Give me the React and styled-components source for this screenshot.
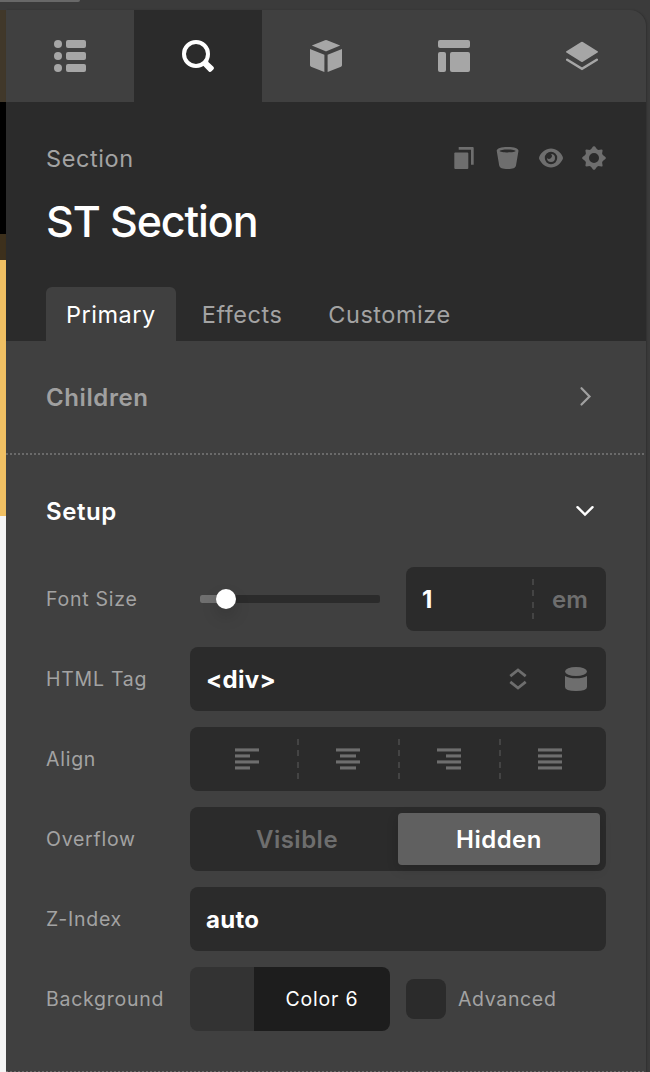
import React, { useState } from "react";
import styled, { createGlobalStyle } from "styled-components";

const GlobalStyle = createGlobalStyle`
  * {
    box-sizing: border-box;
  }

  body {
    margin: 0;
    background: #3b3b3b;
    font-family: Inter, "Liberation Sans", sans-serif;
    overflow: hidden;
  }

  button {
    font: inherit;
    letter-spacing: inherit;
    border: 0;
    padding: 0;
    background: none;
  }
`;

const mainTabs = [
  {
    id: "outline",
    icon: (
      <svg width="32" height="32" fill="currentColor">
        <circle cx="4" cy="4" r="4" />
        <circle cx="4" cy="16" r="4" />
        <circle cx="4" cy="28" r="4" />
        <rect x="12" width="20" height="8" rx="2" />
        <rect x="12" y="12" width="20" height="8" rx="2" />
        <rect x="12" y="24" width="20" height="8" rx="2" />
      </svg>
    ),
  },
  {
    id: "inspector",
    icon: (
      <svg width="32" height="32" fill="currentColor">
        <circle cx="14" cy="14" r="12" fill="none" stroke="currentColor" strokeWidth="4" />
        <path d="M21 25.5L26.8 31.4Q28.2 32.6 29.5 31.3L31.3 29.5Q32.6 28.2 31.4 26.8L26.3 22V19L20 23Z" />
      </svg>
    ),
  },
  {
    id: "elements",
    icon: (
      <svg width="32" height="32" fill="currentColor">
        <path d="M15 .3Q16 -.1 17 .3L30.2 5.6L17 11Q16 11.4 15 11L1.8 5.6Z" />
        <path d="M0 9L14.4 14.8V32L1 26.7Q0 26.3 0 25.3Z" />
        <path d="M32 9L17.6 14.8V32L31 26.7Q32 26.3 32 25.3Z" />
      </svg>
    ),
  },
  {
    id: "layout",
    icon: (
      <svg width="32" height="32" fill="currentColor">
        <rect width="32" height="8" rx="2" />
        <rect y="12" width="8" height="20" rx="2" />
        <rect x="12" y="12" width="20" height="20" rx="2" />
      </svg>
    ),
  },
  {
    id: "layers",
    icon: (
      <svg width="32" height="32" fill="currentColor">
        <path d="M15.2 2.1Q16 1.6 16.8 2.1L31.6 11.3Q32.4 12 31.6 12.6L16.8 21.8Q16 22.3 15.2 21.8L.4 12.6Q-.4 12 .4 11.3Z" />
        <path
          d="M1.2 19.7L16 28.7L30.8 19.7"
          fill="none"
          stroke="currentColor"
          strokeWidth="2.5"
          strokeLinecap="round"
        />
      </svg>
    ),
  },
];

const headerActions = [
  {
    id: "duplicate",
    icon: (
      <svg width="24" height="24" fill="currentColor">
        <rect x="2.3" y="6.5" width="14" height="16.5" rx="1" />
        <path d="M6.7 1H20.7Q21.7 1 21.7 2V18.8H19V3.7H6.7Z" />
      </svg>
    ),
  },
  {
    id: "delete",
    icon: (
      <svg width="24" height="24" viewBox="-0.6 0 24 24" fill="currentColor">
        <path
          fillRule="evenodd"
          d="M1.1 4.7C1.1 2.4 5.6 1 12 1S22.9 2.4 22.9 4.7L20.4 19.5C20 22 17 23 12 23S4 22 3.6 19.5ZM12 3.4C8 3.4 4 4.1 4 5S8 6.4 12 6.4S20 5.9 20 5S16 3.4 12 3.4Z"
        />
      </svg>
    ),
  },
  {
    id: "preview",
    icon: (
      <svg width="24" height="24" fill="currentColor">
        <path
          fillRule="evenodd"
          d="M12 2.6C6.5 2.6 2.3 6.5 .3 10.7Q-.2 12 .3 13.3C2.3 17.5 6.5 21.4 12 21.4S21.7 17.5 23.7 13.3Q24.2 12 23.7 10.7C21.7 6.5 17.5 2.6 12 2.6ZM12 5.8A6.2 6.2 0 1 1 12 18.2A6.2 6.2 0 1 1 12 5.8Z"
        />
        <path d="M12 8A4 4 0 1 1 8 12A2.4 2.4 0 0 0 12 8Z" />
      </svg>
    ),
  },
  {
    id: "settings",
    icon: (
      <svg width="24" height="24" fill="currentColor">
        <path
          fillRule="evenodd"
          d="M11 .6Q12 -.3 13 .6L15 3.2L16.5 3.9L19.4 3.4Q20.6 3.5 20.6 4.6L20.1 7.5L20.8 9L23.4 11Q24.3 12 23.4 13L20.8 15L20.1 16.5L20.6 19.4Q20.5 20.6 19.4 20.6L16.5 20.1L15 20.8L13 23.4Q12 24.3 11 23.4L9 20.8L7.5 20.1L4.6 20.6Q3.4 20.5 3.4 19.4L3.9 16.5L3.2 15L.6 13Q-.3 12 .6 11L3.2 9L3.9 7.5L3.4 4.6Q3.5 3.4 4.6 3.4L7.5 3.9L9 3.2ZM12 7A5 5 0 1 0 12 17A5 5 0 1 0 12 7Z"
        />
      </svg>
    ),
  },
];

// [x, width] of the four lines in each icon
const alignOptions = {
  left: [[0, 24], [0, 15], [0, 24], [0, 15]],
  center: [[0, 24], [4, 16], [0, 24], [4, 16]],
  right: [[0, 24], [9, 15], [0, 24], [9, 15]],
  justify: [[0, 24], [0, 24], [0, 24], [0, 24]],
};

function App() {
  const [mainTab, setMainTab] = useState("inspector");
  const [subTab, setSubTab] = useState("Primary");
  const [overflow, setOverflow] = useState("Hidden");
  const [fontSize] = useState(1);

  return (
    <>
      <GlobalStyle />
      <StTopStrip>
        <StTopCorner />
      </StTopStrip>
      <StLayout>
        <StCanvas>
          <StBand $height={92} $color="#41382a" />
          <StBand $height={132} $color="#000" />
          <StBand $height={26} $color="#3d301c" />
          <StBand $height={256} $color="#f0c063" />
          <StBand $height={556} $color="#f5f5f5" />
        </StCanvas>
        <StPanel>
          <StMainTabs>
            {mainTabs.map((tab) => (
              <StMainTab
                key={tab.id}
                $active={tab.id === mainTab}
                onClick={() => setMainTab(tab.id)}
              >
                {tab.icon}
              </StMainTab>
            ))}
          </StMainTabs>

          <StHeader>
            <StHeaderTop>
              <StType>Section</StType>
              <StActions>
                {headerActions.map((action) => (
                  <StAction key={action.id}>{action.icon}</StAction>
                ))}
              </StActions>
            </StHeaderTop>
            <StTitle>ST Section</StTitle>
            <StSubTabs>
              {["Primary", "Effects", "Customize"].map((name) => (
                <StSubTab key={name} $active={name === subTab} onClick={() => setSubTab(name)}>
                  {name}
                </StSubTab>
              ))}
            </StSubTabs>
          </StHeader>

          <StGroup>
            <StGroupHeader>
              Children
              <svg width="42" height="24" fill="none" stroke="currentColor" strokeWidth="2.2">
                <path d="M17.5 3.2L25.5 11.4L17.5 19.5" strokeLinecap="round" />
              </svg>
            </StGroupHeader>
          </StGroup>

          <StGroup>
            <StGroupHeader $open>
              Setup
              <svg width="42" height="24" fill="none" stroke="currentColor" strokeWidth="2.4">
                <path d="M13.5 8.2L21 15.6L28.5 8.2" strokeLinecap="round" />
              </svg>
            </StGroupHeader>
            <StControls>
              <StRow>
                <StLabel>Font Size</StLabel>
                <StSplit>
                  <StSlider>
                    <StTrack>
                      <StFill style={{ width: `${fontSize * 14.5}%` }} />
                      <StThumb />
                    </StTrack>
                  </StSlider>
                  <StField>
                    <StValue>{fontSize}</StValue>
                    <StDivider />
                    <StUnit>em</StUnit>
                  </StField>
                </StSplit>
              </StRow>

              <StRow>
                <StLabel>HTML Tag</StLabel>
                <StField>
                  <StValue>&lt;div&gt;</StValue>
                  <StFieldIcons>
                    <svg width="18" height="24" fill="none" stroke="currentColor" strokeWidth="2.8">
                      <path d="M1.3 9.2L9 3L16.7 9.2M1.3 14.8L9 21L16.7 14.8" />
                    </svg>
                    <svg width="22" height="24" fill="currentColor">
                      <ellipse cx="11" cy="4.5" rx="11" ry="4.5" />
                      <path d="M0 8.9Q4 11.2 11 11.2T22 8.9V20Q22 24 11 24T0 20Z" />
                    </svg>
                  </StFieldIcons>
                </StField>
              </StRow>

              <StRow>
                <StLabel>Align</StLabel>
                <StSegments>
                  {Object.entries(alignOptions).map(([name, lines], i) => (
                    <React.Fragment key={name}>
                      {i > 0 && <StDivider $inline />}
                      <StSegment>
                        <svg width="24" height="22" fill="currentColor">
                          {lines.map(([x, width], n) => (
                            <rect key={n} x={x} y={n * 6 + 0.4} width={width} height="3.1" />
                          ))}
                        </svg>
                      </StSegment>
                    </React.Fragment>
                  ))}
                </StSegments>
              </StRow>

              <StRow>
                <StLabel>Overflow</StLabel>
                <StSegments>
                  {["Visible", "Hidden"].map((name) => (
                    <StSegment
                      key={name}
                      $active={name === overflow}
                      onClick={() => setOverflow(name)}
                    >
                      {name}
                    </StSegment>
                  ))}
                </StSegments>
              </StRow>

              <StRow>
                <StLabel>Z-Index</StLabel>
                <StField>
                  <StValue>auto</StValue>
                </StField>
              </StRow>

              <StRow>
                <StLabel>Background</StLabel>
                <StSplit>
                  <StColor>
                    <StSwatch />
                    <StColorName>Color 6</StColorName>
                  </StColor>
                  <StCheck>
                    <StCheckbox />
                    Advanced
                  </StCheck>
                </StSplit>
              </StRow>
            </StControls>
          </StGroup>
        </StPanel>
      </StLayout>
    </>
  );
}

export default App;

const StTopStrip = styled.div`
  height: 10px;
  background: #3b3b3b;
`;

const StTopCorner = styled.div`
  width: 80px;
  height: 2px;
  background: #686868;
  border-radius: 0 0 8px 0;
`;

const StLayout = styled.div`
  display: flex;
  height: 1062px;
`;

const StCanvas = styled.div`
  width: 6px;
`;

const StBand = styled.div`
  height: ${({ $height }) => $height}px;
  background: ${({ $color }) => $color};
`;

const StPanel = styled.div`
  width: 640px;
  height: 1062px;
  background: #404040;
  border-radius: 0 16px 0 0;
  box-shadow: 1px 0 2px rgba(0, 0, 0, 0.2);
  overflow: hidden;
`;

const StMainTabs = styled.div`
  display: grid;
  grid-template-columns: repeat(5, 1fr);
  height: 92px;
`;

const StMainTab = styled.button`
  display: flex;
  align-items: center;
  justify-content: center;
  color: ${({ $active }) => ($active ? "#fff" : "#a6a6a6")};
  background: ${({ $active }) => ($active ? "#2b2b2b" : "transparent")};
`;

const StHeader = styled.div`
  display: flex;
  flex-direction: column;
  height: 239px;
  padding: 40px 40px 0;
  background: #2b2b2b;
`;

const StHeaderTop = styled.div`
  display: flex;
  align-items: center;
  justify-content: space-between;
  height: 32px;
`;

const StType = styled.div`
  font-size: 23.5px;
  letter-spacing: 0.6px;
  color: #a3a3a3;
`;

const StActions = styled.div`
  display: flex;
  gap: 19.4px;
  color: #6e6e6e;
`;

const StAction = styled.button`
  display: flex;
  color: inherit;
`;

const StTitle = styled.h1`
  margin: 19px 0 0;
  height: 56px;
  line-height: 56px;
  font-size: 43px;
  font-weight: 500;
  letter-spacing: -1.1px;
  color: #fff;
`;

const StSubTabs = styled.div`
  display: flex;
  gap: 6px;
  margin-top: auto;
`;

const StSubTab = styled.button`
  height: 54px;
  padding: 0 20px;
  font-size: 23.5px;
  line-height: 56px;
  letter-spacing: 0.52px;
  border-radius: 6px 6px 0 0;
  color: ${({ $active }) => ($active ? "#fff" : "#a3a3a3")};
  background: ${({ $active }) => ($active ? "#404040" : "transparent")};
`;

const StGroup = styled.section`
  padding: 0 40px 2px;
  background: repeating-linear-gradient(90deg, #6a6a6a 0 2px, #404040 2px 4px) bottom / 100% 2px
    no-repeat;
`;

const StGroupHeader = styled.div`
  display: flex;
  align-items: center;
  justify-content: space-between;
  height: 112px;
  font-size: 24px;
  font-weight: 600;
  letter-spacing: 0.6px;
  color: ${({ $open }) => ($open ? "#fff" : "#a0a0a0")};
`;

const StControls = styled.div`
  display: flex;
  flex-direction: column;
  gap: 16px;
  padding-bottom: 40px;
`;

const StRow = styled.div`
  display: grid;
  grid-template-columns: 144px 416px;
  align-items: center;
  height: 64px;
`;

const StLabel = styled.label`
  font-size: 19.5px;
  letter-spacing: 0.75px;
  color: #a3a3a3;
`;

const StSplit = styled.div`
  display: grid;
  grid-template-columns: 200px 200px;
  gap: 16px;
`;

const StSlider = styled.div`
  display: flex;
  align-items: center;
  padding: 0 10px;
`;

const StTrack = styled.div`
  display: flex;
  align-items: center;
  width: 180px;
  height: 8px;
  border-radius: 2px;
  background: #2b2b2b;
`;

const StFill = styled.div`
  height: 8px;
  border-radius: 2px 0 0 2px;
  background: #707070;
`;

const StThumb = styled.div`
  flex: none;
  width: 20px;
  height: 20px;
  margin-left: -10px;
  border-radius: 50%;
  background: #fff;
  box-shadow: 0 8px 16px rgba(0, 0, 0, 0.15);
`;

const StField = styled.div`
  display: flex;
  align-items: center;
  height: 64px;
  border-radius: 8px;
  background: #2b2b2b;
`;

const StValue = styled.div`
  flex: 1;
  padding-left: 16px;
  font-size: 24px;
  font-weight: 650;
  letter-spacing: 0.3px;
  color: #fff;
`;

const StDivider = styled.div`
  width: 2px;
  height: 40px;
  margin-right: ${({ $inline }) => ($inline ? "-2px" : "0")};
  background: repeating-linear-gradient(#444 0 6px, transparent 6px 11.33px);
`;

const StUnit = styled.div`
  width: 72px;
  text-align: center;
  font-size: 24px;
  font-weight: 600;
  color: #6e6e6e;
`;

const StFieldIcons = styled.div`
  display: flex;
  align-items: center;
  gap: 38px;
  padding-right: 19px;
  color: #6e6e6e;
`;

const StSegments = styled.div`
  display: flex;
  align-items: center;
  height: 64px;
  padding: 6px;
  border-radius: 8px;
  background: #2b2b2b;
`;

const StSegment = styled.button`
  display: flex;
  flex: 1;
  align-items: center;
  justify-content: center;
  height: 52px;
  font-size: 24px;
  font-weight: 600;
  letter-spacing: 0.5px;
  border-radius: 4px;
  color: ${({ $active }) => ($active ? "#fff" : "#6e6e6e")};
  background: ${({ $active }) => ($active ? "#606060" : "transparent")};
  box-shadow: ${({ $active }) => ($active ? "0 4px 12px rgba(0, 0, 0, 0.15)" : "none")};
`;

const StColor = styled.div`
  display: flex;
  height: 64px;
  border-radius: 8px;
  overflow: hidden;
`;

const StSwatch = styled.div`
  width: 64px;
  background: #333;
`;

const StColorName = styled.div`
  flex: 1;
  text-align: center;
  line-height: 64px;
  font-size: 19.5px;
  letter-spacing: 0.8px;
  color: #fff;
  background: #1d1d1d;
`;

const StCheck = styled.label`
  display: flex;
  align-items: center;
  gap: 12px;
  font-size: 19.5px;
  letter-spacing: 0.65px;
  color: #a3a3a3;
`;

const StCheckbox = styled.span`
  width: 40px;
  height: 40px;
  border-radius: 8px;
  background: #2b2b2b;
`;
